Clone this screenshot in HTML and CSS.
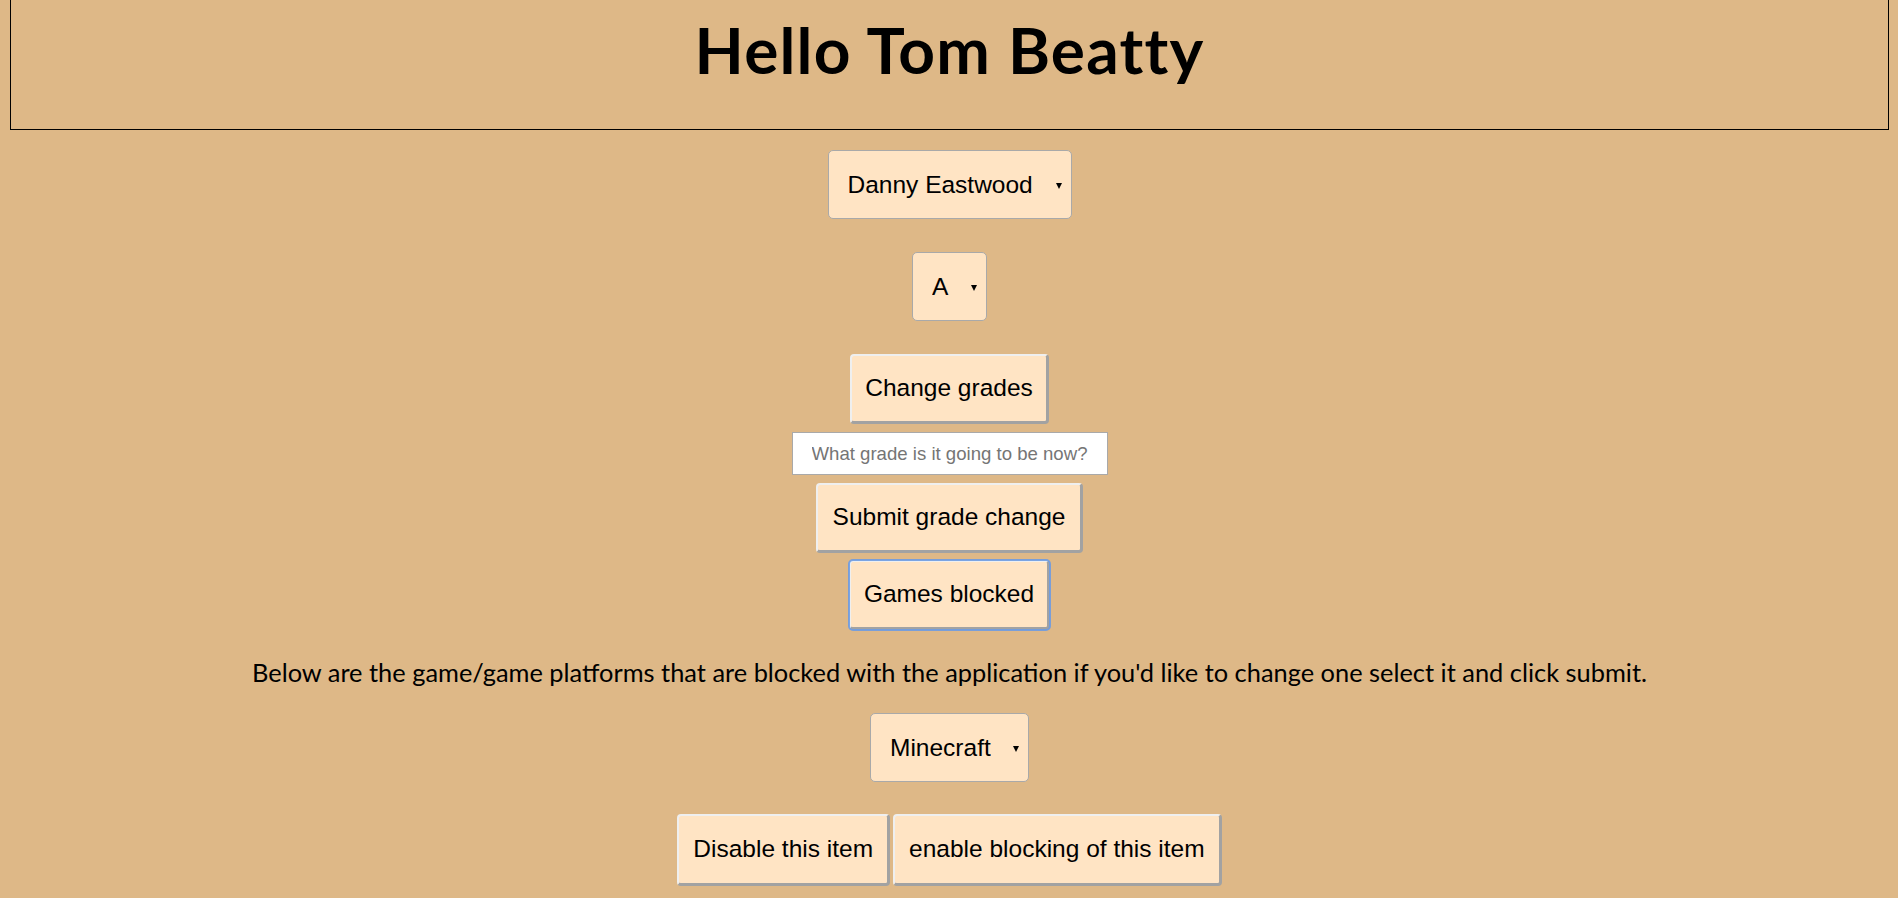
FILE: index.html
```html
<!DOCTYPE html>
<html lang="en">
<head>
<meta charset="utf-8">
<title>Hello Tom Beatty</title>
<link rel="stylesheet" href="styles.css">
</head>
<body>
<header class="banner">
  <h1 class="title">Hello Tom Beatty</h1>
</header>
<main class="panel">
  <div class="pick pick-student">
    <select class="field">
      <option>Danny Eastwood</option>
    </select>
  </div>
  <div class="pick pick-grade">
    <select class="field">
      <option>A</option>
    </select>
  </div>
  <button class="btn btn-change" type="button">Change grades</button>
  <input class="entry" type="text" placeholder="What grade is it going to be now?">
  <button class="btn btn-submit" type="button">Submit grade change</button>
  <button class="btn btn-games is-focused" type="button">Games blocked</button>
  <p class="note">Below are the game/game platforms that are blocked with the application if you'd like to change one select it and click submit.</p>
  <div class="pick pick-game">
    <select class="field">
      <option>Minecraft</option>
    </select>
  </div>
  <div class="actions">
    <button class="btn btn-row" type="button">Disable this item</button>
    <button class="btn btn-row" type="button">enable blocking of this item</button>
  </div>
</main>
</body>
</html>
```

FILE: styles.css
```css
html, body {
  margin: 0;
  padding: 0;
}

body {
  background: #deb887;
  color: #000;
  font-family: "Lato", "Open Sans", sans-serif;
  padding: 0 9px 0 10px;
}

.banner {
  height: 130px;
  box-sizing: border-box;
  border: 1px solid #000;
  border-top: none;
  padding-top: 11px;
}

.title {
  margin: 0;
  text-align: center;
  font-size: 64px;
  line-height: 77px;
  font-weight: 700;
  letter-spacing: 1.2px;
}

.panel {
  display: flex;
  flex-direction: column;
  align-items: center;
}

.pick {
  position: relative;
}

.pick::after {
  content: "";
  position: absolute;
  right: 10px;
  top: 50%;
  margin-top: -2px;
  border-left: 3.5px solid transparent;
  border-right: 3.5px solid transparent;
  border-top: 6px solid #000;
  pointer-events: none;
}

.field {
  appearance: none;
  -webkit-appearance: none;
  display: block;
  font-family: "Liberation Sans", Arial, sans-serif;
  font-size: 24.5px;
  line-height: 28px;
  color: #000;
  background: #ffe4c4;
  border: 1px solid #a9a9a9;
  border-radius: 5px;
  padding: 20px 37px 19px 19px;
  margin: 0;
}

.pick-student {
  margin-top: 20px;
}

.pick-grade {
  margin-top: 33px;
}

.btn {
  font-family: "Liberation Sans", Arial, sans-serif;
  font-size: 24.5px;
  line-height: 28px;
  color: #000;
  background: #ffe4c4;
  border-style: solid;
  border-width: 2px 3px 3px 2px;
  border-color: #efefef #a2a2a2 #a2a2a2 #efefef;
  border-radius: 4px;
  padding: 18px 13px 19px;
  margin: 0;
}

.btn-change {
  margin-top: 33px;
}

.entry {
  margin-top: 8px;
  width: 316px;
  box-sizing: border-box;
  font-family: "Liberation Sans", Arial, sans-serif;
  font-size: 18.6px;
  line-height: 21px;
  padding: 10px 19px;
  border: 1px solid #a9a9a9;
  background: #fff;
  text-align: center;
  color: #000;
}

.entry::placeholder {
  color: #757575;
}

.btn-submit {
  margin-top: 8px;
  padding-left: 15px;
  padding-right: 15px;
}

.btn-games {
  margin-top: 7px;
}

.is-focused {
  outline: 2px solid rgba(110, 155, 225, 0.9);
  outline-offset: -1px;
}

.note {
  margin: 25px 0 0;
  font-size: 25.4px;
  line-height: 35px;
  text-align: center;
}

.pick-game {
  margin-top: 23px;
}

.actions {
  margin-top: 32px;
  display: flex;
  gap: 3px;
}

.btn-row {
  padding: 19px 14px 20px;
}
```
